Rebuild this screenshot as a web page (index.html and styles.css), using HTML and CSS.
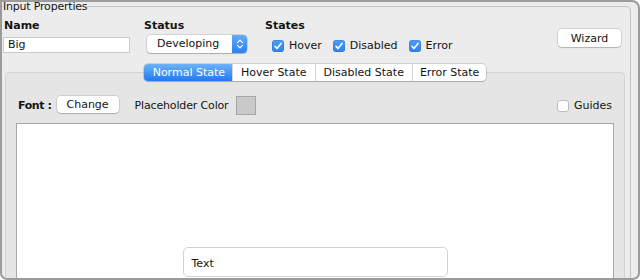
FILE: index.html
```html
<!DOCTYPE html>
<html lang="en">
<head>
<meta charset="utf-8">
<title>Input Properties</title>
<link rel="stylesheet" href="styles.css">
</head>
<body>
<div class="window">
  <fieldset class="props">
    <legend>Input Properties</legend>
    <div class="top">
      <div class="col col-name">
        <div class="lbl">Name</div>
        <div class="textfield">Big</div>
      </div>
      <div class="col col-status">
        <div class="lbl">Status</div>
        <div class="select">
          <span class="sel-text">Developing</span>
          <span class="stepper"><svg width="8" height="12" viewBox="0 0 8 12"><path d="M1.5 4.6 L4 2.1 L6.5 4.6 M1.5 7.4 L4 9.9 L6.5 7.4" fill="none" stroke="#fff" stroke-width="1.3" stroke-linecap="round" stroke-linejoin="round"/></svg></span>
        </div>
      </div>
      <div class="col col-states">
        <div class="lbl">States</div>
        <div class="checks">
          <div class="check"><span class="box on"><svg width="12" height="12" viewBox="0 0 12 12"><path d="M3 6.3 L5 8.4 L9 3.4" fill="none" stroke="#fff" stroke-width="1.6" stroke-linecap="round" stroke-linejoin="round"/></svg></span><span>Hover</span></div>
          <div class="check"><span class="box on"><svg width="12" height="12" viewBox="0 0 12 12"><path d="M3 6.3 L5 8.4 L9 3.4" fill="none" stroke="#fff" stroke-width="1.6" stroke-linecap="round" stroke-linejoin="round"/></svg></span><span>Disabled</span></div>
          <div class="check"><span class="box on"><svg width="12" height="12" viewBox="0 0 12 12"><path d="M3 6.3 L5 8.4 L9 3.4" fill="none" stroke="#fff" stroke-width="1.6" stroke-linecap="round" stroke-linejoin="round"/></svg></span><span>Error</span></div>
        </div>
      </div>
      <button class="btn wizard" type="button">Wizard</button>
    </div>
    <div class="tabpanel">
      <div class="tabs">
        <span class="tab active">Normal State</span>
        <span class="tab">Hover State</span>
        <span class="tab">Disabled State</span>
        <span class="tab">Error State</span>
      </div>
      <div class="toolbar">
        <span class="lbl font-lbl">Font :</span>
        <button class="btn change" type="button">Change</button>
        <span class="ph-label">Placeholder Color</span>
        <span class="swatch"></span>
        <div class="check guides"><span class="box off"></span><span>Guides</span></div>
      </div>
      <div class="canvas">
        <div class="preview">Text</div>
      </div>
    </div>
  </fieldset>
</div>
</body>
</html>
```
FILE: styles.css
```css
* { box-sizing: border-box; }
html, body { margin: 0; padding: 0; }
body {
  width: 640px;
  height: 280px;
  overflow: hidden;
  background: #ffffff;
  font-family: "DejaVu Sans", "Liberation Sans", sans-serif;
  font-size: 11px;
  color: #141414;
}
.window {
  width: 640px;
  height: 280px;
  border: 2px solid #9b9b9b;
  border-radius: 0 8px 7px 7px;
  background: #ececec;
  overflow: hidden;
}
.props {
  margin: 0 7px 0 0;
  padding: 8px 0 0 1px;
  min-width: 0;
  height: 340px;
  border: 1px solid #c3c3c3;
  border-left: none;
  border-bottom: none;
  border-radius: 0 5px 0 0;
}
.props legend {
  padding: 0;
  margin: 0;
  line-height: 9px;
  font-size: 11px;
  letter-spacing: -0.2px;
  color: #141414;
}
.top {
  display: flex;
  align-items: flex-start;
}
.lbl {
  font-weight: bold;
  line-height: 13px;
  padding-left: 1px;
}
.col-name { width: 127px; }
.textfield {
  margin-top: 5px;
  height: 16px;
  background: #fff;
  border: 1px solid #cbcbcb;
  padding-left: 4px;
  line-height: 14px;
}
.col-status { width: 121px; margin-left: 13px; }
.select {
  display: flex;
  margin: 3px 0 0 4px;
  width: 100px;
  height: 18px;
  background: #fff;
  border-radius: 4px;
  box-shadow: 0 0 0 0.5px rgba(0,0,0,0.22), 0 1px 1px rgba(0,0,0,0.18);
}
.sel-text {
  flex: 1;
  padding-left: 10px;
  line-height: 18px;
}
.stepper {
  width: 15px;
  display: flex;
  align-items: center;
  justify-content: center;
  background: linear-gradient(#62abf9, #2a7ff1);
  border-radius: 0 4px 4px 0;
}
.checks {
  display: flex;
  gap: 11px;
  margin-top: 8px;
  padding-left: 8px;
}
.check {
  display: flex;
  align-items: center;
  gap: 5px;
  line-height: 12px;
}
.box {
  width: 12px;
  height: 12px;
  border-radius: 3px;
  display: block;
}
.box svg { display: block; }
.box.on {
  background: linear-gradient(#4d9cf8, #2f83f2);
  box-shadow: inset 0 0 0 0.5px rgba(0,0,0,0.15);
}
.box.off {
  background: #fff;
  box-shadow: inset 0 0 0 1px #bdbdbd;
}
.btn {
  font: inherit;
  color: #141414;
  background: #fff;
  border: none;
  border-radius: 4px;
  padding: 0;
  box-shadow: 0 0 0 0.5px rgba(0,0,0,0.2), 0 1px 1px rgba(0,0,0,0.16);
}
.wizard {
  width: 63px;
  height: 18px;
  margin: 10px 9px 0 auto;
}
.tabpanel {
  margin: 19px 5px 0 2px;
  height: 300px;
  padding: 0 10px;
  border: 1px solid #d4d4d4;
  border-radius: 4px;
  background: #e5e5e5;
  display: flex;
  flex-direction: column;
}
.tabs {
  align-self: center;
  display: flex;
  height: 17px;
  margin-top: -9px;
  background: #fff;
  border-radius: 4px;
  box-shadow: 0 0 0 0.5px rgba(0,0,0,0.25), 0 1px 1px rgba(0,0,0,0.14);
}
.tab {
  padding: 0 8px;
  line-height: 17px;
  border-left: 1px solid #d6d6d6;
}
.tab:first-child { border-left: none; padding: 0 7px 0 9px; }
.tab:last-child { padding: 0 7px; }
.tab.active {
  color: #fff;
  background: linear-gradient(#6cb3fb, #2279f0);
  border-radius: 4px 0 0 4px;
}
.toolbar {
  display: flex;
  align-items: center;
  height: 19px;
  margin-top: 15px;
  padding: 0 2px 0 1px;
}
.font-lbl { letter-spacing: -0.4px; }
.change {
  align-self: flex-start;
  width: 62px;
  height: 17px;
  margin-left: 5px;
}
.ph-label { margin-left: 16px; letter-spacing: -0.15px; }
.swatch {
  width: 20px;
  height: 19px;
  margin-left: 7px;
  background: #c9c9c9;
  border: 1px solid #a6a6a6;
}
.guides { margin-left: auto; }
.canvas {
  flex: 1;
  margin-top: 8px;
  background: #fff;
  border: 1px solid #a9a9a9;
  display: flex;
  flex-direction: column;
  align-items: center;
}
.preview {
  margin-top: 123px;
  width: 265px;
  height: 30px;
  padding: 3px 0 0 8px;
  line-height: 26px;
  background: #fff;
  border: 1px solid #d3d3d3;
  border-radius: 5px;
}
```
